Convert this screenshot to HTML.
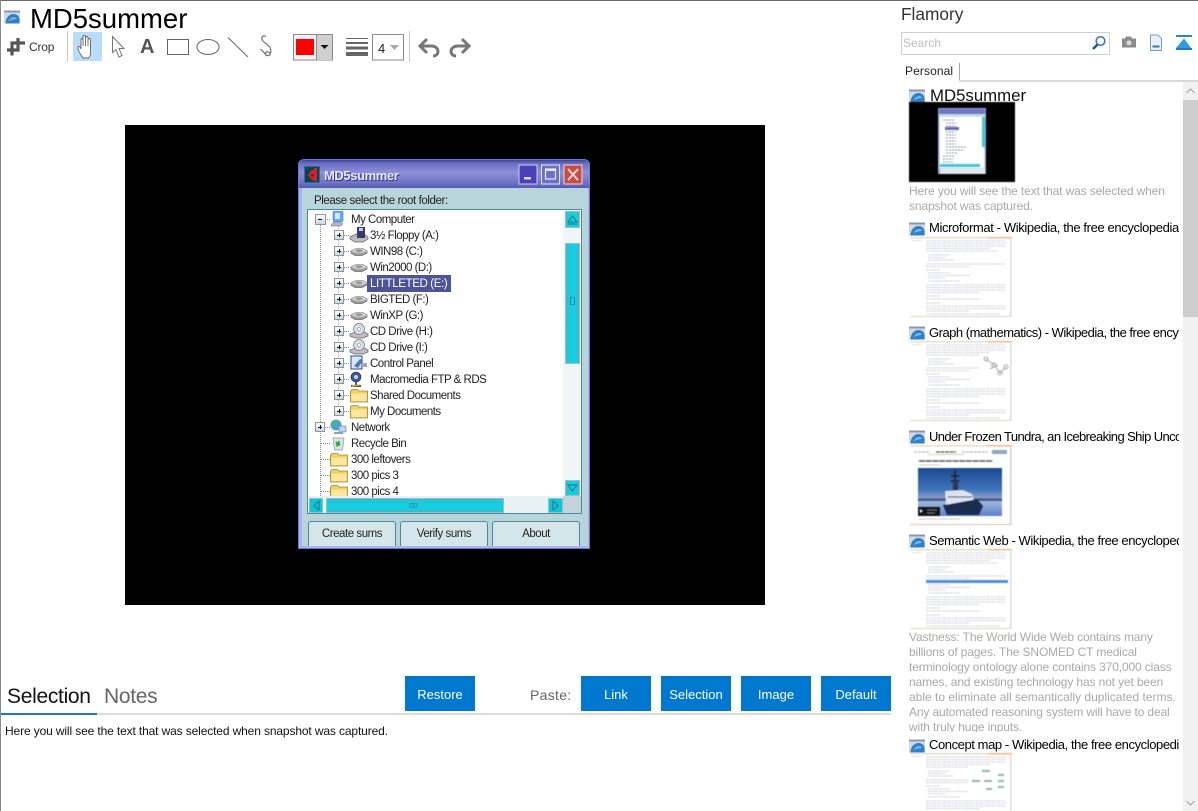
<!DOCTYPE html>
<html><head><meta charset="utf-8"><style>
html,body{margin:0;padding:0;background:#fff}
#r{position:relative;width:1198px;height:811px;overflow:hidden;background:#fff;font-family:"Liberation Sans",sans-serif;color:#000}
#r div,#r span.a,#r svg.a{position:absolute}
.x{white-space:nowrap}
.b{background:#0078d0;color:#fff;width:70px;height:35px;top:676px;text-align:center;line-height:37px;font-size:13px}
.t{font-size:11.500px;line-height:16px;white-space:nowrap;color:#222;letter-spacing:-.5px;left:370px;margin-top:1px}
.l1{left:351px}
.sel{background:#4a5496;color:#fff;padding:0 4px 0 3px;left:367px;letter-spacing:-.36px;margin-top:0;line-height:16px;height:16px;padding-top:1px;box-sizing:content-box}
.title{left:929px;width:250px;overflow:hidden;font-size:13px;line-height:16px;white-space:nowrap}
.g{left:909px;font-size:12px;line-height:15px;color:#a8a8a8;white-space:nowrap;letter-spacing:-.13px}
.ic{left:909px;width:17px;height:14px}
.sb{background:linear-gradient(90deg,#49b3c5,#11cfe0 30%,#14d0e2 70%,#49b3c5);border:1px solid #8cc4d0;box-sizing:border-box}
.wb{background:#d5e6ea;border:1px solid #4f8a9a;border-bottom:0;border-radius:3px 3px 0 0;box-sizing:border-box;text-align:center;font-size:11.500px;line-height:25px;color:#222;letter-spacing:-.45px;top:521px;height:25px}
.pb{width:8px;height:8px;border:1px solid #8a96a0;background:linear-gradient(#fff,#c8d8d8);left:334px}
.pb:after{content:"";position:absolute;left:2px;top:3.500px;width:4px;height:1px;background:#111}
.pb:before{content:"";position:absolute;left:3.500px;top:2px;width:1px;height:4px;background:#111}
.m:before{display:none}
.h{left:343px;width:6px;height:0;border-top:1px dotted #888}
.i{width:20px;height:16px}
.soft{filter:blur(.4px)}
</style></head><body><div id="r">
<svg width="0" height="0" style="position:absolute"><defs>
<symbol id="app" viewBox="0 0 17 14"><rect width="16" height="13" y=".5" fill="#cfd8e4"/><rect y=".5" width="16" height="2" fill="#8c98a8"/><path d="M1.500 13.500C1.500 7.500 5.500 4 9.500 4s6 3 6 6v3.500z" fill="#2f80c8"/><path d="M4.500 11.500c1-2.500 3-4.500 5.500-4.500 2 0 3 1.500 3 1.500s-2 1-3.500 1-3 1-5 2z" fill="#7ab8e8"/></symbol>
<symbol id="hd" viewBox="0 0 20 16"><path d="M2 8l5-2.500h7l4 2.500v2l-5 2.500H6L2 10z" fill="#a0a0a0" stroke="#6a6a6a" stroke-width=".7"/><path d="M2 8l5 2h7l4-2-4-2.500H7z" fill="#d0d0d0"/><ellipse cx="10" cy="7.800" rx="3.500" ry="1.400" fill="#989898"/></symbol>
<symbol id="fd" viewBox="0 0 20 16"><path d="M1 10l6-3h8l4 3v2l-5 3H6l-5-3z" fill="#bbb" stroke="#666" stroke-width=".7"/><rect x="8" y="0" width="8" height="11" fill="#343a6a"/><rect x="10" y="1" width="4" height="3" fill="#ccd"/></symbol>
<symbol id="cd" viewBox="0 0 20 16"><path d="M1 11l6-2h8l4 2v2l-5 2H6l-5-2z" fill="#c0c0c0" stroke="#666" stroke-width=".7"/><circle cx="10" cy="6" r="5.500" fill="#d7dce8" stroke="#777" stroke-width=".7"/><circle cx="10" cy="6" r="1.500" fill="#fff" stroke="#888" stroke-width=".5"/></symbol>
<symbol id="fo" viewBox="0 0 20 16"><path d="M1.500 15V4L3 2.500h5.500L10 4h8.500v11z" fill="#f2cf60" stroke="#9b8a3e" stroke-width=".8"/><path d="M2.500 6.500h15V14h-15z" fill="#fde79a"/></symbol>
<symbol id="pc" viewBox="0 0 20 16"><rect x="5" y="0" width="10" height="11" rx="2" fill="#6aa8f0" stroke="#3f6fb8" stroke-width=".6"/><rect x="7" y="2" width="5" height="6" fill="#cfe6ff"/><path d="M3 15c1-3 2-4 5-4h4l3 2-2 2z" fill="#aeb9cf" stroke="#667" stroke-width=".5"/></symbol>
<symbol id="wiki" viewBox="0 0 102 80" preserveAspectRatio="none"><rect width="102" height="80" fill="#fff"/><rect width="102" height="1.500" fill="#e0dccc"/><rect x="78" width="24" height="1.500" fill="#eab98a"/><rect x="100" y="2" width="1.500" height="78" fill="#dadada"/><rect y="79" width="102" height="1" fill="#d8d4c4"/><g stroke="#c4c6d0" stroke-width=".8" fill="none" stroke-dasharray="3 .6 2 .6 4 .6"><path d="M16 4H96M16 6.500H96M16 9H96M16 11.500H80M16 14H88M18 18H40M18 20.500H36M18 23H44M16 27H96M16 29.500H60M16 33H30M18 36H40M18 38.500H60M18 41H36M18 44H50M16 48H96M16 50.500H96M16 53H96M16 55.500H70M16 59H30M16 62H70M16 66H30M16 69H96M16 71.500H96M16 74H60M16 77H90"/></g><path d="M2 3.500H12" stroke="#ccc" stroke-dasharray="2 1"/></symbol>
</defs></svg>

<div style="left:0;top:0;width:1198px;height:1px;background:#6a6a6a"></div>
<div style="left:0;top:0;width:1px;height:811px;background:#8a8a8a"></div>

<svg class="a" style="left:4px;top:10px" width="17" height="14"><use href="#app"/></svg>
<div class="x" style="left:30px;top:3px;font-size:27.500px;line-height:32px">MD5summer</div>

<svg class="a" style="left:0;top:28px" width="480" height="36" viewBox="0 28 480 36" fill="none">
<path d="M18 38v12H7M25 43H12v12.500" stroke="#555" stroke-width="3.200" fill="none"/>
<rect x="67" y="31" width="1" height="31" fill="#c8c8c8"/>
<rect x="73" y="32" width="29" height="29" fill="#b9dcf8"/>
<path d="M81 55c-2-3-3-6-3-7-.5-2 1.500-2 2-1l1 2v-9c0-2 2-2 2 0v6-9c0-2 2.500-2 2.500 0v9-8c0-2 2.500-2 2.500 0v8-6c0-2 2.500-2 2.500 0v12c0 3-1 5-2 6H83z" stroke="#666" stroke-width=".9" fill="#fff"/>
<path d="M112.500 36.500v16l3.500-3 3 7.500 3-1.500-3-7h5z" stroke="#777" stroke-width="1" fill="#fff"/>
<rect x="167.500" y="39.500" width="21" height="15" stroke="#666"/>
<ellipse cx="208" cy="47" rx="11" ry="7.500" stroke="#666"/>
<path d="M228 37.500l20 19.500" stroke="#666"/>
<path d="M266 36.500c-3-1.500-5 .5-4 3 1 3 6 4.500 8 8 1.500 3 1 7-1.500 8-2 .7-3.500-1-2.800-2.700.7-1.500 3-1.500 4 .5M260.500 49c2 2 4 4 6.500 7" stroke="#666" stroke-width="1.100"/>
<rect x="293.500" y="34.500" width="39" height="25.500" fill="#f4f4f4" stroke="#8a8a8a"/>
<rect x="316" y="35" width="16" height="25" fill="#d0d0d0"/><rect x="316" y="35" width="1" height="25" fill="#8a8a8a"/>
<rect x="296" y="39" width="18" height="16" fill="#f00"/>
<path d="M320.500 45h8l-4 4z" fill="#111"/>
<path d="M346 38.500h22" stroke="#666" stroke-width="1"/><path d="M346 43h22" stroke="#666" stroke-width="2"/><path d="M346 48h22" stroke="#666" stroke-width="3"/><path d="M346 54h22" stroke="#666" stroke-width="4"/>
<rect x="372.500" y="34.500" width="31" height="25.500" fill="#fff" stroke="#8a8a8a"/>
<path d="M390 45h9l-4.500 5z" fill="#a8a8a8"/>
<rect x="409" y="31" width="1" height="31" fill="#c8c8c8"/>
<path d="M421 46h10c5 0 7 3 7 5.500S436 56 433 56" stroke="#777" stroke-width="3"/><path d="M427 39l-7 7 7 7" stroke="#777" stroke-width="3"/>
<path d="M468 46h-10c-5 0-7 3-7 5.500s2 4.500 5 4.500" stroke="#777" stroke-width="3"/><path d="M462 39l7 7-7 7" stroke="#777" stroke-width="3"/>
</svg>
<div class="x" style="left:29px;top:40px;font-size:12px;line-height:15px;color:#333;letter-spacing:-.2px">Crop</div>
<div class="x" style="left:140px;top:36px;font-size:20px;line-height:22px;font-weight:bold;color:#555">A</div>
<div class="x" style="left:378px;top:41px;font-size:13px;line-height:15px;color:#222">4</div>

<!-- snapshot -->
<div style="left:125px;top:125px;width:640px;height:480px;background:#000"></div>
<div style="left:298px;top:159px;width:292px;height:390px;background:#6e78cc;border-radius:6px 6px 0 0"></div>
<div style="left:299px;top:160px;width:290px;height:388px;background:#aab4f0;border-radius:5px 5px 0 0"></div>
<div style="left:299px;top:160px;width:290px;height:28px;background:linear-gradient(#3f4398 0,#6a6ec4 12%,#8d90d8 45%,#6b6fc4 85%,#5558ad);border-radius:5px 5px 0 0"></div>
<div style="left:302px;top:188px;width:286px;height:358px;background:#b9d5dc"></div>
<svg class="a" style="left:304px;top:166px" width="16" height="17"><rect width="16" height="17" fill="#0e7f8c"/><rect x="1" y="1" width="14" height="15" fill="#1b3c4c"/><path d="M12 3v11l-4 0L4 9l4-5z" fill="#d8202c"/><rect x="10" y="2" width="3" height="13" fill="#d8202c"/><path d="M7 8.500h3v2H7z" fill="#1b3c4c"/></svg>
<div class="x" style="left:324px;top:168px;font-size:13px;line-height:16px;font-weight:bold;color:#e8e8f8;text-shadow:1px 1px 0 #34367e;letter-spacing:-.4px">MD5summer</div>
<svg class="a" style="left:518px;top:164px" width="66" height="21"><rect x="1" y="1" width="18" height="19" fill="#4a3fb4" stroke="#c9cdf0"/><rect x="6" y="13" width="7" height="2.500" fill="#d8d8f8"/><rect x="23.500" y="1" width="18" height="19" fill="#6d71c6" stroke="#e4e6f8"/><rect x="27.500" y="5" width="10" height="10" fill="none" stroke="#e8e8ff" stroke-width="1.200"/><rect x="27.500" y="5" width="10" height="2" fill="#e8e8ff"/><rect x="46" y="1" width="18" height="19" fill="#cc4a44" stroke="#e8dcdc"/><path d="M50 5l10 11M60 5L50 16" stroke="#f4d8d8" stroke-width="2"/></svg>
<div class="x" style="left:314px;top:194px;font-size:11.500px;line-height:14px;color:#222;letter-spacing:-.4px">Please select the root folder:</div>

<div style="left:307px;top:209px;width:275px;height:305px;box-sizing:border-box;background:#fff;border:1px solid #4f8a9a"></div>
<div style="left:563px;top:210px;width:18px;height:303px;background:#f0f6f8"></div>
<div style="left:308px;top:496px;width:255px;height:17px;background:#e8f2f4"></div>
<div style="left:563px;top:496px;width:18px;height:17px;background:#c2d4da"></div>
<div class="sb" style="left:565px;top:211px;width:15px;height:17px"></div>
<svg class="a" style="left:565px;top:211px" width="15" height="17"><path d="M3 11l4.500-6 4.500 6z" fill="none" stroke="#137a8c"/><path d="M3 13h9" stroke="#137a8c"/></svg>
<div class="sb" style="left:565px;top:243px;width:15px;height:121px"></div>
<div style="left:570px;top:297px;width:5px;height:8px;border:1px solid #2a8ea0;box-sizing:border-box"></div>
<div class="sb" style="left:565px;top:480px;width:15px;height:16px"></div>
<svg class="a" style="left:565px;top:480px" width="15" height="16"><path d="M3 5l4.500 6 4.500-6z" fill="none" stroke="#137a8c"/></svg>
<div style="left:309px;top:498px;width:14px;height:15px;background:#14c2d6;border:1px solid #8cc4d0;box-sizing:border-box"></div>
<div style="left:326px;top:498px;width:178px;height:15px;background:linear-gradient(#49b3c5,#11cfe0 30%,#14d0e2 70%,#49b3c5);border:1px solid #8cc4d0;box-sizing:border-box"></div>
<div style="left:548px;top:498px;width:15px;height:15px;background:#14c2d6;border:1px solid #8cc4d0;box-sizing:border-box"></div>
<svg class="a" style="left:309px;top:498px" width="254" height="15"><path d="M10 3L5 7.500 10 12zM244 3l5 4.500-5 4.500z" fill="none" stroke="#137a8c"/><path d="M101 5.500h3v4h-3zM105 5.500h3v4h-3z" fill="none" stroke="#2a8ea0" stroke-width=".7"/></svg>

<div style="left:320px;top:225px;width:0;height:271px;border-left:1px dotted #888"></div>
<div style="left:338px;top:226px;width:0;height:185px;border-left:1px dotted #aaa"></div>
<div class="pb m" style="left:315px;top:214px;width:9px;height:9px"></div>
<div style="left:325px;top:219px;width:5px;border-top:1px dotted #888"></div>
<svg class="a i" style="left:328px;top:211px"><use href="#pc"/></svg>
<div class="t l1" style="top:211px">My Computer</div>

<div class="pb" style="top:230px"></div><div class="h" style="top:235px"></div><svg class="a i" style="left:349px;top:227px"><use href="#fd"/></svg><div class="t" style="top:227px">3½ Floppy (A:)</div>
<div class="pb" style="top:246px"></div><div class="h" style="top:251px"></div><svg class="a i" style="left:349px;top:243px"><use href="#hd"/></svg><div class="t" style="top:243px">WIN98 (C:)</div>
<div class="pb" style="top:262px"></div><div class="h" style="top:267px"></div><svg class="a i" style="left:349px;top:259px"><use href="#hd"/></svg><div class="t" style="top:259px">Win2000 (D:)</div>
<div class="pb" style="top:278px"></div><div class="h" style="top:283px"></div><svg class="a i" style="left:349px;top:275px"><use href="#hd"/></svg><div class="t sel" style="top:275px">LITTLETED (E:)</div>
<div class="pb" style="top:294px"></div><div class="h" style="top:299px"></div><svg class="a i" style="left:349px;top:291px"><use href="#hd"/></svg><div class="t" style="top:291px">BIGTED (F:)</div>
<div class="pb" style="top:310px"></div><div class="h" style="top:315px"></div><svg class="a i" style="left:349px;top:307px"><use href="#hd"/></svg><div class="t" style="top:307px">WinXP (G:)</div>
<div class="pb" style="top:326px"></div><div class="h" style="top:331px"></div><svg class="a i" style="left:349px;top:323px"><use href="#cd"/></svg><div class="t" style="top:323px">CD Drive (H:)</div>
<div class="pb" style="top:342px"></div><div class="h" style="top:347px"></div><svg class="a i" style="left:349px;top:339px"><use href="#cd"/></svg><div class="t" style="top:339px">CD Drive (I:)</div>
<div class="pb" style="top:358px"></div><div class="h" style="top:363px"></div>
<svg class="a i" style="left:349px;top:355px"><rect x="2" y="1" width="11" height="13" fill="#dfe8fb" stroke="#2a4a8c"/><path d="M5 11l6-7 3 1-5 8z" fill="#4a78c8"/><path d="M13 8h5v4h-5z" fill="#aaa"/></svg><div class="t" style="top:355px">Control Panel</div>
<div class="pb" style="top:374px"></div><div class="h" style="top:379px"></div>
<svg class="a i" style="left:349px;top:371px"><circle cx="7" cy="6" r="5" fill="#3a5a9c" stroke="#222" stroke-width=".6"/><circle cx="7" cy="6" r="2" fill="#c8d8f0"/><path d="M7 11v3M2 15h10" stroke="#222" stroke-width="1.500"/><path d="M3 15l8-1" stroke="#d8b820"/></svg><div class="t" style="top:371px">Macromedia FTP &amp; RDS</div>
<div class="pb" style="top:390px"></div><div class="h" style="top:395px"></div><svg class="a i" style="left:349px;top:387px"><use href="#fo"/></svg><div class="t" style="top:387px">Shared Documents</div>
<div class="pb" style="top:406px"></div><div class="h" style="top:411px"></div><svg class="a i" style="left:349px;top:403px"><use href="#fo"/></svg><div class="t" style="top:403px">My Documents</div>
<div class="pb" style="left:315px;top:422px"></div><div style="left:325px;top:427px;width:5px;border-top:1px dotted #888"></div>
<svg class="a i" style="left:329px;top:419px"><circle cx="7" cy="6" r="5.500" fill="#4aa0e8"/><path d="M3 4l4-2 2 3-3 3z" fill="#4cc04c"/><path d="M10 7h7v6h-7z" fill="#bcd0f0" stroke="#667" stroke-width=".5"/><path d="M5 14h9" stroke="#99a" stroke-width="2"/></svg><div class="t l1" style="top:419px">Network</div>
<div style="left:321px;top:443px;width:9px;border-top:1px dotted #888"></div>
<svg class="a i" style="left:329px;top:435px"><path d="M4 3h11l-1.500 12h-8z" fill="#d8e4e8" stroke="#89a" stroke-width=".7"/><path d="M6.500 7l4-1 1 4-4 2z" fill="#3aa83a"/></svg><div class="t l1" style="top:435px">Recycle Bin</div>
<div style="left:321px;top:459px;width:9px;border-top:1px dotted #888"></div><svg class="a i" style="left:329px;top:451px"><use href="#fo"/></svg><div class="t l1" style="top:451px">300 leftovers</div>
<div style="left:321px;top:475px;width:9px;border-top:1px dotted #888"></div><svg class="a i" style="left:329px;top:467px"><use href="#fo"/></svg><div class="t l1" style="top:467px">300 pics 3</div>
<div style="left:321px;top:491px;width:9px;border-top:1px dotted #888"></div><svg class="a" style="left:329px;top:483px" width="20" height="13"><use href="#fo" width="20" height="16"/></svg><div class="t l1" style="top:483px">300 pics 4</div>

<div class="wb" style="left:308px;width:88px">Create sums</div>
<div class="wb" style="left:400px;width:88px">Verify sums</div>
<div class="wb" style="left:492px;width:88px">About</div>

<!-- bottom -->
<div class="x" style="left:7px;top:684px;font-size:21px;line-height:26px;color:#111;letter-spacing:-.3px">Selection</div>
<div class="x" style="left:104px;top:684px;font-size:21px;line-height:26px;color:#666;letter-spacing:-.3px">Notes</div>
<div style="left:1px;top:713px;width:890px;height:2px;background:#dcdcdc"></div>
<div style="left:1px;top:713px;width:96px;height:2px;background:#1f78bc"></div>
<div class="b" style="left:405px">Restore</div>
<div class="x" style="left:530px;top:686px;font-size:14px;line-height:18px;color:#666;letter-spacing:.3px">Paste:</div>
<div class="b" style="left:581px">Link</div>
<div class="b" style="left:661px">Selection</div>
<div class="b" style="left:741px">Image</div>
<div class="b" style="left:821px">Default</div>
<div class="x" style="left:5px;top:724px;font-size:12px;line-height:15px;color:#111;letter-spacing:-.13px">Here you will see the text that was selected when snapshot was captured.</div>

<!-- sidebar -->
<div class="x" style="left:901px;top:3px;font-size:17.300px;line-height:22px;color:#333">Flamory</div>
<div style="left:901px;top:32px;width:209px;height:23px;box-sizing:border-box;border:1px solid #cfcfcf"></div>
<div class="x" style="left:903px;top:35px;font-size:12px;line-height:16px;color:#bdbdbd">Search</div>
<svg class="a" style="left:1090px;top:34px" width="18" height="18" fill="none"><circle cx="10.500" cy="7" r="4.300" stroke="#3c78b4" stroke-width="1.600"/><path d="M7.500 10.500L3 15" stroke="#1f5c98" stroke-width="2.600"/></svg>
<svg class="a" style="left:1121px;top:35px" width="16" height="14"><path d="M1 3.500h3l1-2h5l1 2h4v9H1z" fill="#8a8a8a"/><circle cx="8" cy="7.800" r="2.600" fill="#d8d8d8"/></svg>
<svg class="a" style="left:1149px;top:34px" width="14" height="18"><path d="M1.500 1h7.500l3.500 3.500V16.500H1.500z" fill="#e8f0f8" stroke="#7a9cc0"/><rect x="3.500" y="11.500" width="7" height="2" fill="#2f78bc"/></svg>
<svg class="a" style="left:1175px;top:35px" width="18" height="16"><rect x="1" y="0" width="16" height="2" fill="#2f88c8"/><path d="M9 3.500l7 9.500H1z" fill="#2f98e0"/><rect x="1" y="13" width="16" height="2" fill="#1f78bc"/></svg>
<div class="x" style="left:905px;top:63px;font-size:12px;line-height:16px;color:#222;letter-spacing:.1px">Personal</div>
<div style="left:959px;top:63px;width:1px;height:18px;background:#a8a8a8"></div>
<div style="left:959px;top:80px;width:239px;height:2px;background:#d8d8d8"></div>

<div style="left:1183px;top:82px;width:15px;height:729px;background:#f0f0f0"></div>
<div style="left:1183px;top:100px;width:15px;height:217px;background:#cdcdcd"></div>
<svg class="a" style="left:1183px;top:84px" width="15" height="14" fill="none"><path d="M3.500 9l4-4 4 4" stroke="#a8a8a8" stroke-width="1.200"/></svg>
<svg class="a" style="left:1183px;top:796px" width="15" height="14" fill="none"><path d="M3.500 5l4 4 4-4" stroke="#a8a8a8" stroke-width="1.200"/></svg>

<svg class="a ic" style="top:89px"><use href="#app"/></svg>
<div class="x" style="left:930px;top:86px;font-size:16.800px;line-height:20px;color:#111">MD5summer</div>
<svg class="a soft" style="left:909px;top:102px" width="106" height="80"><rect width="106" height="80" fill="#000"/><rect x="29" y="6" width="48" height="66" fill="#9aa4e6"/><rect x="30" y="7" width="46" height="5" fill="#7074c6"/><rect x="30" y="12" width="46" height="55" fill="#c8dde2"/><rect x="31" y="15" width="44" height="51" fill="#fff"/><rect x="73" y="15" width="3" height="30" fill="#40c4d6"/><rect x="31" y="62" width="40" height="3" fill="#40c4d6"/><rect x="36" y="25" width="14" height="3" fill="#626ba8"/><rect x="31" y="67" width="45" height="5" fill="#dfeaee"/><path d="M34 18h12M37 21h10M37 24h10M37 30h10M37 33h10M37 36h10M37 39h10M37 42h10M37 45h20M37 48h18M37 51h12M34 54h12M34 57h10M34 60h10" stroke="#8a8f9a" stroke-width="1" stroke-dasharray="2 1"/></svg>
<div class="g" style="top:184px">Here you will see the text that was selected when</div>
<div class="g" style="top:199px">snapshot was captured.</div>

<svg class="a ic" style="top:222px"><use href="#app"/></svg>
<div class="title" style="top:220px;letter-spacing:-.38px">Microformat - Wikipedia, the free encyclopedia</div>
<svg class="a soft" style="left:910px;top:237px" width="102" height="80"><use href="#wiki"/></svg>

<svg class="a ic" style="top:326px"><use href="#app"/></svg>
<div class="title" style="top:325px;letter-spacing:-.5px">Graph (mathematics) - Wikipedia, the free encyclopedia</div>
<svg class="a soft" style="left:910px;top:341px" width="102" height="80"><use href="#wiki"/><rect x="70" y="12" width="30" height="30" fill="#fff"/><path d="M76 18l8 6 6 8 6-6M80 28l8-4" stroke="#aaa" fill="none"/><circle cx="76" cy="18" r="2" fill="none" stroke="#aaa"/><circle cx="84" cy="24" r="2" fill="none" stroke="#aaa"/><circle cx="90" cy="32" r="2" fill="none" stroke="#aaa"/><circle cx="96" cy="26" r="2" fill="none" stroke="#aaa"/></svg>

<svg class="a ic" style="top:430px"><use href="#app"/></svg>
<div class="title" style="top:429px;letter-spacing:-.6px">Under Frozen Tundra, an Icebreaking Ship Uncovers its Mission</div>
<svg class="a soft" style="left:910px;top:445px" width="102" height="80"><defs><linearGradient id="sky" x1="0" y1="0" x2="0" y2="1"><stop offset="0" stop-color="#1c4a90"/><stop offset=".45" stop-color="#3f74bc"/><stop offset=".62" stop-color="#8a9ccc"/><stop offset=".66" stop-color="#2c3a60"/><stop offset=".7" stop-color="#a0b8e0"/><stop offset="1" stop-color="#5c80c4"/></linearGradient></defs><rect width="102" height="80" fill="#fff"/><rect width="102" height="1.500" fill="#e0dcc0"/><rect x="78" width="24" height="1.500" fill="#eab98a"/><rect x="100" y="2" width="1.500" height="78" fill="#d0d0d0"/><rect y="79" width="102" height="1" fill="#d8c4b0"/><path d="M4 7H20M52 7H78" stroke="#aaa" stroke-width="1" stroke-dasharray="3 1"/><path d="M26 7H46" stroke="#555" stroke-width="1.200" stroke-dasharray="4 .6"/><path d="M18 9.500h36" stroke="#d8d0b0"/><rect x="82" y="5" width="15" height="4" fill="#8aa8c4"/><path d="M9 16H83" stroke="#555" stroke-width="1.400" stroke-dasharray="6 .7"/><path d="M9 20H30" stroke="#ccc"/><rect x="8" y="23" width="84" height="48" fill="url(#sky)"/><path d="M33 60l4 10h32l4-9-6-7z" fill="#1a2c50"/><path d="M35 46l18-1 9 4 2 6-28 5z" fill="#dde4ee"/><path d="M38 52h24" stroke="#5a6a88"/><path d="M45 44V25M41 31h8M41 36h8" stroke="#1c2a44" stroke-width="2"/><rect x="43" y="36" width="5" height="9" fill="#2a3a58"/><rect x="8" y="62" width="22" height="9" fill="#14141c"/><path d="M10 64l3 2-3 2z" fill="#fff"/><path d="M17 65h10M17 68h8" stroke="#888"/><path d="M9 74H50" stroke="#ccc"/></svg>

<svg class="a ic" style="top:534px"><use href="#app"/></svg>
<div class="title" style="top:533px;letter-spacing:-.42px">Semantic Web - Wikipedia, the free encyclopedia</div>
<svg class="a soft" style="left:910px;top:549px" width="102" height="80"><use href="#wiki"/><rect x="16" y="31" width="82" height="3" fill="#4a90dc"/></svg>

<div class="g" style="top:630px">Vastness: The World Wide Web contains many</div>
<div class="g" style="top:645px">billions of pages. The SNOMED CT medical</div>
<div class="g" style="top:660px">terminology ontology alone contains 370,000 class</div>
<div class="g" style="top:675px">names, and existing technology has not yet been</div>
<div class="g" style="top:690px;letter-spacing:0">able to eliminate all semantically duplicated terms.</div>
<div class="g" style="top:705px">Any automated reasoning system will have to deal</div>
<div style="left:909px;top:720px;width:270px;height:12px;overflow:hidden"><div class="g" style="left:0;top:0">with truly huge inputs.</div></div>

<svg class="a ic" style="top:739px"><use href="#app"/></svg>
<div class="title" style="top:737px;letter-spacing:-.42px">Concept map - Wikipedia, the free encyclopedia</div>
<svg class="a soft" style="left:910px;top:753px" width="102" height="80"><use href="#wiki"/><rect x="58" y="12" width="40" height="28" fill="#fff"/><path d="M72 18h8M62 28h8M74 28h8M88 22h6M88 28h6M88 34h6M76 36h6" stroke="#8ab8a0" stroke-width="2"/></svg>
</div></body></html>
